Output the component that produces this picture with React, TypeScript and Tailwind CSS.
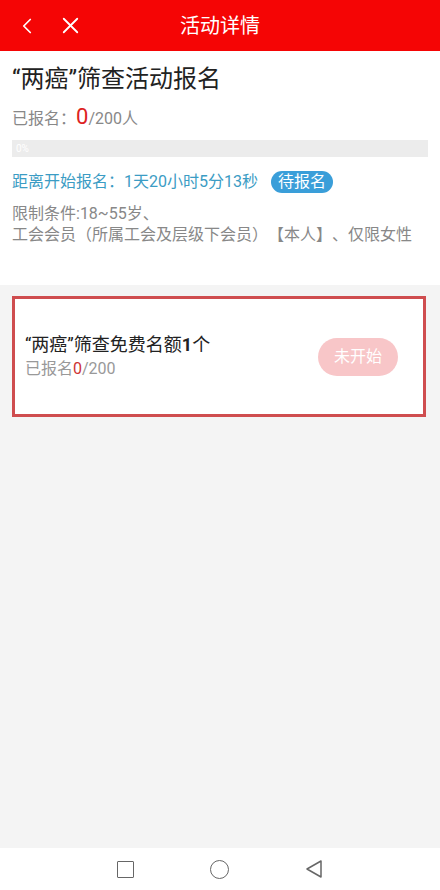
import { ChevronLeft, X } from "lucide-react";

const font = { fontFamily: 'Roboto, "Noto Sans CJK SC", sans-serif' };

export default function App() {
    return (
        <div className="w-[440px] h-[890px] flex flex-col bg-[#f4f4f4] [text-spacing-trim:space-all]" style={font}>
            <header className="h-[51px] bg-[#f50505] flex items-center relative shrink-0">
                <ChevronLeft className="absolute left-[14px] top-[13px] text-white" size={26} strokeWidth={1.6} />
                <X className="absolute left-[57px] top-[12px] text-white" size={27} strokeWidth={1.6} />
                <h1 className="w-full text-center text-white text-[20px] leading-none">活动详情</h1>
            </header>

            <section className="bg-white px-3 pt-[12px] h-[234px] shrink-0">
                <h2 className="text-[24px] leading-[32px] text-[#222]">“两癌”筛查活动报名</h2>
                <p className="mt-[11px] text-[16px] leading-[22px] text-[#888]">
                    已报名：<span className="text-[22px] text-[#d22]">0</span>/200人
                </p>
                <div className="mt-[10px] h-[17px] bg-[#ececec] text-white text-[10px] leading-[17px] pl-1">0%</div>
                <div className="mt-[14px] flex items-center gap-[13px]">
                    <span className="text-[16px] leading-[22px] text-[#3b9cc4]">距离开始报名：1天20小时5分13秒</span>
                    <span className="bg-[#3a9ed9] text-white text-[16px] leading-[22px] px-[7px] rounded-full">待报名</span>
                </div>
                <p className="mt-[10px] text-[16px] leading-[21px] text-[#888]">限制条件:18~55岁、</p>
                <p className="text-[16px] leading-[21px] text-[#888]">工会会员（所属工会及层级下会员）【本人】、仅限女性</p>
            </section>

            <div className="mt-[11px] mx-3 w-[414px] h-[121px] border-[3px] border-[#cf4d4f] bg-white flex items-center pl-[10px] pr-[25px]">
                <div className="flex-1">
                    <p className="text-[18px] leading-[25px] text-[#222]">“两癌”筛查免费名额<span className="font-bold">1</span>个</p>
                    <p className="text-[16px] leading-[24px] text-[#999]">已报名<span className="text-[#c33]">0</span>/200</p>
                </div>
                <button className="w-[80px] h-[38px] rounded-full bg-[#f8c6c8] text-white text-[16px]">未开始</button>
            </div>

            <div className="flex-1" />

            <nav className="h-[42px] bg-white flex items-center justify-center gap-[76px] shrink-0">
                <div className="w-[17px] h-[17px] border-[1.5px] border-[#666] rounded-[1px]" />
                <div className="w-[19px] h-[19px] border-[1.5px] border-[#666] rounded-full" />
                <svg width="18" height="20" viewBox="0 0 18 20" fill="none" stroke="#666" strokeWidth="1.5" strokeLinejoin="round">
                    <path d="M16 2 L2 10 L16 18 Z" />
                </svg>
            </nav>
        </div>
    );
}
